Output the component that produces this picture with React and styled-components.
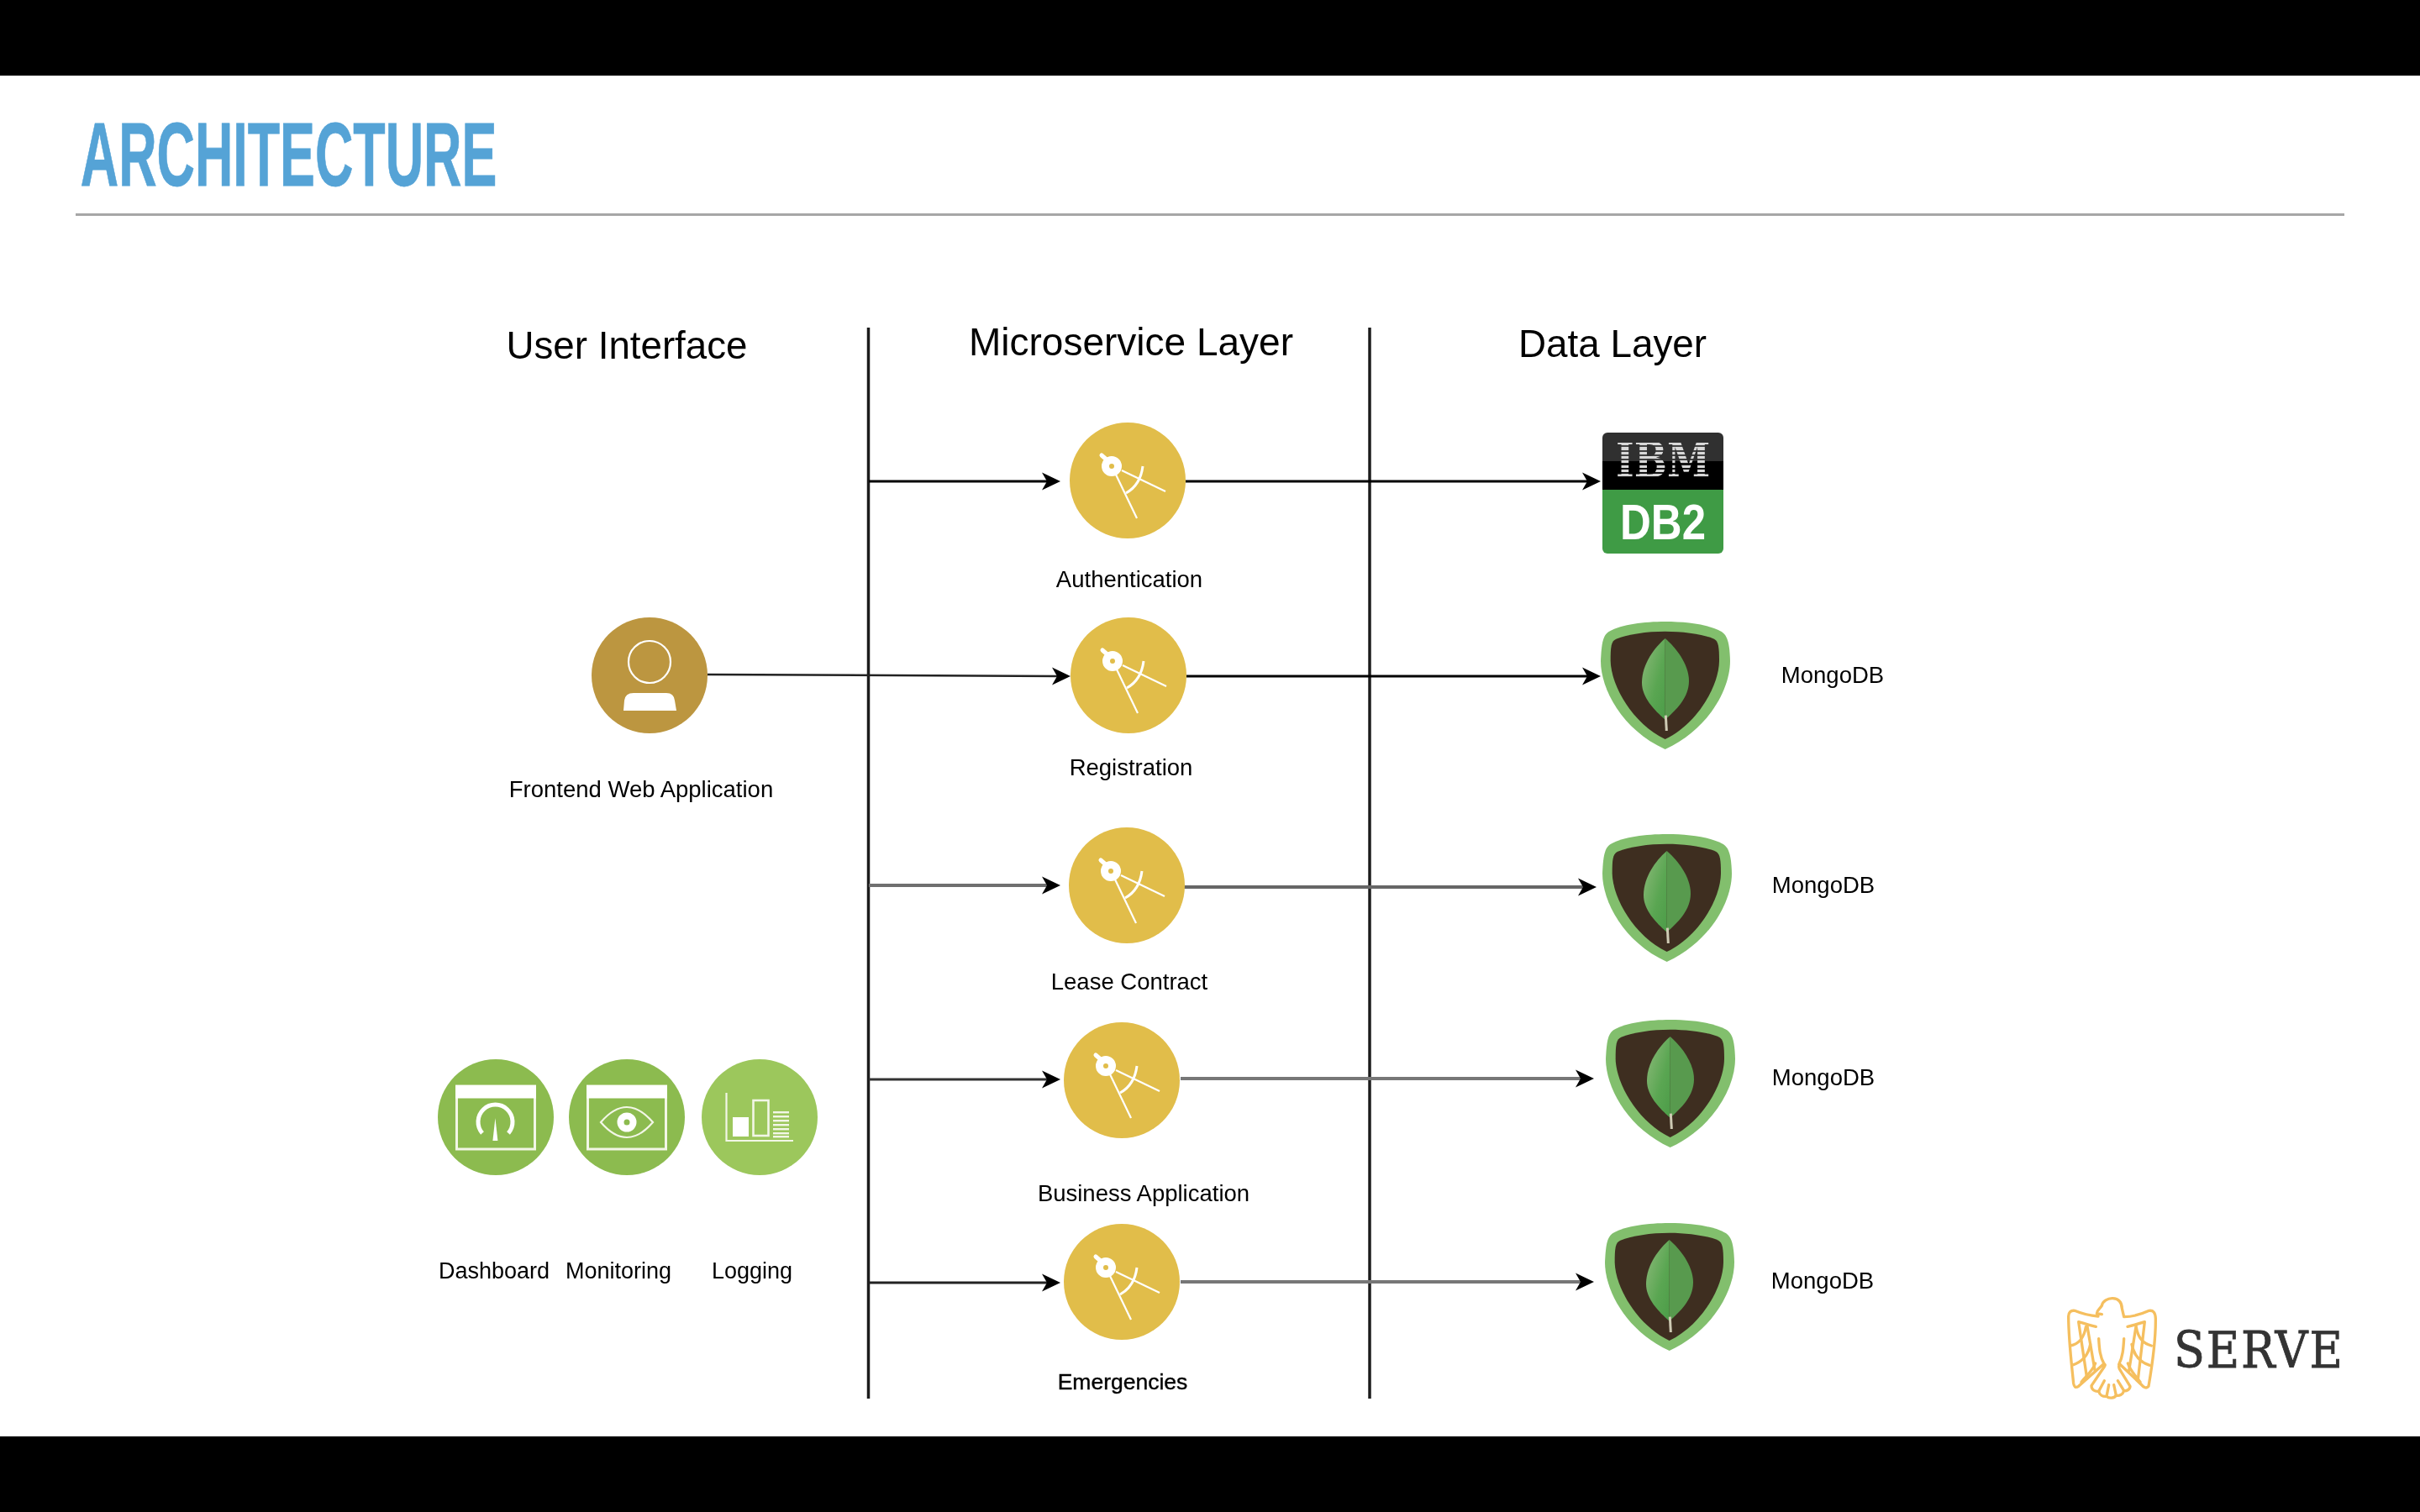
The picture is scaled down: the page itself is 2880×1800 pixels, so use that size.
import React from "react"
import styled, { createGlobalStyle } from "styled-components"

const DIAGRAM_TOP = 300

const GlobalStyle = createGlobalStyle`
    html, body {
        margin: 0;
        padding: 0;
        background: #fff;
    }
`

const Page = styled.div`
    width: 2880px;
    height: 1800px;
    display: flex;
    flex-direction: column;
    overflow: hidden;
    font-family: "Liberation Sans", Arial, sans-serif;
`

const BlackBar = styled.div`
    flex: 0 0 90px;
    background: #000;
`

const Slide = styled.main`
    flex: 1;
    position: relative;
    background: #fff;
`

const Header = styled.header`
    height: 164px;
    margin: 0 90px;
    border-bottom: 3px solid #a6a6a6;
    overflow: hidden;
`

const Title = styled.h1`
    margin: 0;
    padding: 41px 0 0 10px;
    font-family: "Liberation Sans", sans-serif;
    font-size: 107px;
    line-height: 106px;
    font-weight: 700;
    color: #55a3d6;
    white-space: nowrap;
    transform: scaleX(0.587);
    transform-origin: left top;
    -webkit-text-stroke: 0.8px #55a3d6;
    filter: blur(0.4px);
`

const Diagram = styled.section`
    position: absolute;
    left: 0;
    top: ${DIAGRAM_TOP - 90}px;
    width: 2880px;
    height: ${1710 - DIAGRAM_TOP}px;
    filter: blur(0.6px);
`

const Connectors = styled.svg`
    position: absolute;
    left: 0;
    top: 0;
    width: 2880px;
    height: ${1710 - DIAGRAM_TOP}px;
`

const Node = styled.div`
    position: absolute;
    left: ${p => p.$x}px;
    top: ${p => p.$y - DIAGRAM_TOP}px;
`

const Circle = styled(Node)`
    width: 138px;
    height: 138px;
    border-radius: 50%;
    background: ${p => p.$color};

    svg {
        display: block;
        width: 138px;
        height: 138px;
    }
`

const Shield = styled(Node)`
    width: 154px;
    height: 152px;

    svg {
        display: block;
        width: 154px;
        height: 152px;
    }
`

const Label = styled.div`
    position: absolute;
    left: ${p => p.$x}px;
    top: ${p => p.$y - DIAGRAM_TOP}px;
    transform: translate(-50%, -50%);
    font-size: ${p => p.$size || 27.5}px;
    line-height: 1.2;
    color: #000;
    white-space: nowrap;
    ${p => p.$strong && "-webkit-text-stroke: 0.4px #000;"}
`

const Db2Badge = styled(Node)`
    width: 144px;
    height: 144px;
    border-radius: 6px;
    overflow: hidden;
    display: flex;
    flex-direction: column;
`

const Db2Top = styled.div`
    flex: 0 0 68px;
    display: flex;
    align-items: flex-start;
    justify-content: center;
    background: linear-gradient(#303030 0 50%, #000 50%);
`

const IbmMark = styled.span`
    margin-top: 12px;
    height: 42px;
    font-family: "DejaVu Serif", serif;
    font-weight: 700;
    font-size: 58px;
    line-height: 42px;
    color: transparent;
    background: repeating-linear-gradient(#d8d8d8 0 3.2px, rgba(216, 216, 216, 0.1) 3.2px 5.3px);
    -webkit-background-clip: text;
    background-clip: text;
    transform: scaleX(0.8);
`

const Db2Bottom = styled.div`
    flex: 1;
    display: flex;
    align-items: center;
    justify-content: center;
    background: #3f9b45;
`

const Db2Mark = styled.span`
    font-weight: 700;
    font-size: 60px;
    color: #fff;
    transform: scaleX(0.85);
`

const Logo = styled.div`
    position: absolute;
    left: 2457px;
    bottom: 41px;
    display: flex;
    align-items: center;
    gap: 14px;
`

const LogoWord = styled.span`
    font-family: "DejaVu Serif", serif;
    font-size: 59px;
    line-height: 1;
    letter-spacing: 2px;
    color: #333;
    padding-top: 4px;
    transform: scaleX(0.915);
    transform-origin: left center;
    -webkit-text-stroke: 0.8px #333;
`

// service compass, drawn on the 138px circle
const CompassIcon = () => (
    <svg viewBox="0 0 138 138">
        <circle cx="50" cy="52" r="7.5" fill="none" stroke="#fff" strokeWidth="9" />
        <path d="M38 39 L46 46" stroke="#fff" strokeWidth="5" strokeLinecap="round" />
        <path d="M55 62 L80 114" stroke="#fff" strokeWidth="2.2" />
        <path d="M62 57 L114 82" stroke="#fff" strokeWidth="2.2" />
        <path d="M87 52 C85 68 78 78 67 84" fill="none" stroke="#fff" strokeWidth="3" />
    </svg>
)

const PersonIcon = () => (
    <svg viewBox="0 0 138 138">
        <circle cx="69" cy="53" r="25" fill="none" stroke="#fff" strokeWidth="2.2" />
        <path d="M38 111 L39 99 Q40 90 50 90 H89 Q98 90 99 99 L101 111 Z" fill="#fff" />
    </svg>
)

const WindowFrame = () => (
    <>
        <rect x="22.5" y="32" width="93" height="75" fill="none" stroke="#f2f6e6" strokeWidth="3" />
        <rect x="21" y="31" width="96" height="15.5" fill="#fff" />
    </>
)

const GaugeIcon = () => (
    <svg viewBox="0 0 138 138">
        <WindowFrame />
        <path d="M53 88 A20.5 20.5 0 1 1 84 88" fill="none" stroke="#fff" strokeWidth="5" />
        <path d="M68.4 70 L65.4 97 H71.4 Z" fill="#fff" />
    </svg>
)

const EyeIcon = () => (
    <svg viewBox="0 0 138 138">
        <WindowFrame />
        <path d="M38 75 Q69 39 100 75 Q69 111 38 75 Z" fill="none" stroke="#f2f6e6" strokeWidth="2.2" />
        <circle cx="69" cy="75" r="7.5" fill="none" stroke="#fff" strokeWidth="8" />
    </svg>
)

const BarsIcon = () => (
    <svg viewBox="0 0 138 138">
        <path d="M29.5 40 V97 H109" fill="none" stroke="#f2f6e6" strokeWidth="2.2" />
        <rect x="37" y="69" width="19" height="23" fill="#fff" />
        <rect x="61.5" y="49" width="18" height="42" fill="none" stroke="#f2f6e6" strokeWidth="2.6" />
        {[62, 67, 72, 77, 82, 87, 91].map(y => (
            <rect key={y} x="85" y={y} width="19" height="2.4" fill="#f2f6e6" />
        ))}
    </svg>
)

const MongoIcon = ({ id }) => (
    <svg viewBox="75 60 462 456">
        <defs>
            <linearGradient id={`leaf${id}`} x1="0" y1="0" x2="1" y2="1">
                <stop offset="0" stopColor="#8fbb7c" />
                <stop offset="0.6" stopColor="#5aa652" />
                <stop offset="1" stopColor="#4c9c48" />
            </linearGradient>
        </defs>
        <path
            d="M305 60 C230 60 150 70 105 95 C85 107 78 130 75 200 C75 300 150 445 305 516 C460 445 537 300 537 200 C535 130 525 107 505 95 C460 70 380 60 305 60 Z"
            fill="#82bf6d"
        />
        <path
            d="M305 95 C240 95 170 105 130 122 C112 130 110 150 110 200 C112 290 190 425 305 480 C420 425 497 290 498 200 C498 150 495 130 480 122 C440 105 370 95 305 95 Z"
            fill="#3e2e20"
        />
        <path d="M305 120 C270 150 222 210 222 278 C222 330 265 375 305 410 Z" fill={`url(#leaf${id})`} />
        <path d="M305 120 C340 150 390 210 390 272 C390 330 345 375 305 410 Z" fill="#589a4e" />
        <path d="M307 395 L310 450" stroke="#cfcbb4" strokeWidth="9" />
    </svg>
)

const EagleIcon = () => (
    <svg width="116" height="127" viewBox="50 35 348 381" fill="none" stroke="#f5bf5f" strokeWidth="10" strokeLinecap="round" strokeLinejoin="round">
        <path d="M183 103 L165 100 C165 88 176 84 183 72 C186 56 204 45 222 46 C242 47 254 60 255 82 L262 112 C295 112 330 100 352 90 C366 88 374 96 375 118 C376 200 362 290 350 360 C342 370 332 364 322 352 L248 282 C240 288 246 300 252 308 L284 360 C284 372 270 378 262 376 C258 390 245 396 234 392 C228 404 208 404 200 396 C186 398 175 390 172 378 C158 380 146 372 146 358 L192 290 C198 282 192 280 188 282 L100 360 C88 368 84 360 82 350 C74 270 64 190 64 110 C64 96 72 88 86 90 C110 100 140 108 170 110" />
        <path d="M100 130 C120 136 140 142 162 147 M100 130 L130 332 M130 140 L158 302" />
        <path d="M275 147 C295 142 318 136 336 130 M336 130 L312 336 M306 140 L280 304" />
        <path d="M172 190 C174 225 176 255 192 282 M262 190 C260 225 258 255 244 282" />
        <path d="M70 215 C100 210 120 185 126 148 M76 285 C110 275 135 250 142 210 M110 345 C130 320 150 305 160 278" />
        <path d="M360 215 C330 208 312 185 306 150 M354 285 C320 275 298 250 290 210 M320 345 C302 320 285 305 276 278" />
        <path d="M172 378 L192 340 M200 396 L208 355 M234 392 L226 355 M262 376 L240 340" />
    </svg>
)

const rows = [
    { left: [1034, 1262, 573, "#000", 3], right: [1411, 1905, 573, 573, "#000", 3] },
    { left: [842, 1274, 803, "#222", 2.5, 805], right: [1412, 1905, 805, 805, "#000", 3] },
    { left: [1034, 1262, 1054, "#6f6f6f", 4], right: [1408, 1900, 1056, 1056, "#666", 4] },
    { left: [1034, 1262, 1285, "#333", 3], right: [1405, 1897, 1284, 1284, "#777", 4] },
    { left: [1034, 1262, 1527, "#222", 3], right: [1405, 1897, 1526, 1526, "#777", 4] }
]

const Arrow = ({ x1, x2, y1, y2, color, width }) => (
    <>
        <line x1={x1} y1={y1} x2={x2 - 14} y2={y2} stroke={color} strokeWidth={width} />
        <path d={`M${x2} ${y2} L${x2 - 22} ${y2 - 10.5} L${x2 - 16} ${y2} L${x2 - 22} ${y2 + 10.5} Z`} fill="#000" />
    </>
)

const services = [
    { x: 1273, y: 503, label: "Authentication", lx: 1344, ly: 689 },
    { x: 1274, y: 735, label: "Registration", lx: 1346, ly: 913 },
    { x: 1272, y: 985, label: "Lease Contract", lx: 1344, ly: 1168 },
    { x: 1266, y: 1217, label: "Business Application", lx: 1361, ly: 1420 },
    { x: 1266, y: 1457, label: "Emergencies", lx: 1336, ly: 1646, strong: true, size: 26.5 }
]

const stores = [
    { x: 1905, y: 740, lx: 2181, ly: 803 },
    { x: 1907, y: 993, lx: 2170, ly: 1053 },
    { x: 1911, y: 1214, lx: 2170, ly: 1282 },
    { x: 1910, y: 1456, lx: 2169, ly: 1524 }
]

const App = () => (
    <Page>
        <GlobalStyle />
        <BlackBar />
        <Slide>
            <Header>
                <Title>ARCHITECTURE</Title>
            </Header>
            <Diagram>
                <Connectors viewBox={`0 ${DIAGRAM_TOP} 2880 ${1710 - DIAGRAM_TOP}`}>
                    <line x1="1033.5" y1="390" x2="1033.5" y2="1665" stroke="#1c1c1c" strokeWidth="3.5" />
                    <line x1="1630" y1="390" x2="1630" y2="1665" stroke="#1c1c1c" strokeWidth="3.5" />
                    {rows.map(({ left, right }, i) => (
                        <g key={i}>
                            <Arrow x1={left[0]} x2={left[1]} y1={left[2]} y2={left[5] || left[2]} color={left[3]} width={left[4]} />
                            <Arrow x1={right[0]} x2={right[1]} y1={right[2]} y2={right[3]} color={right[4]} width={right[5]} />
                        </g>
                    ))}
                </Connectors>

                <Label $x={746} $y={412} $size={45.7}>User Interface</Label>
                <Label $x={1346} $y={408} $size={46}>Microservice Layer</Label>
                <Label $x={1919} $y={410} $size={45.8}>Data Layer</Label>

                <Circle $x={704} $y={735} $color="#bc9640"><PersonIcon /></Circle>
                <Label $x={763} $y={939}>Frontend Web Application</Label>

                <Circle $x={521} $y={1261} $color="#8cbb4f"><GaugeIcon /></Circle>
                <Circle $x={677} $y={1261} $color="#8cbb4f"><EyeIcon /></Circle>
                <Circle $x={835} $y={1261} $color="#9cc75c"><BarsIcon /></Circle>
                <Label $x={588} $y={1513} $size={27}>Dashboard</Label>
                <Label $x={736} $y={1513} $size={27}>Monitoring</Label>
                <Label $x={895} $y={1513} $size={27}>Logging</Label>

                {services.map(s => (
                    <React.Fragment key={s.label}>
                        <Circle $x={s.x} $y={s.y} $color="#e1bd4a"><CompassIcon /></Circle>
                        <Label $x={s.lx} $y={s.ly} $size={s.size} $strong={s.strong}>{s.label}</Label>
                    </React.Fragment>
                ))}

                <Db2Badge $x={1907} $y={515}>
                    <Db2Top><IbmMark>IBM</IbmMark></Db2Top>
                    <Db2Bottom><Db2Mark>DB2</Db2Mark></Db2Bottom>
                </Db2Badge>

                {stores.map((s, i) => (
                    <React.Fragment key={s.y}>
                        <Shield $x={s.x} $y={s.y}><MongoIcon id={i} /></Shield>
                        <Label $x={s.lx} $y={s.ly}>MongoDB</Label>
                    </React.Fragment>
                ))}
            </Diagram>
            <Logo>
                <EagleIcon />
                <LogoWord>SERVE</LogoWord>
            </Logo>
        </Slide>
        <BlackBar />
    </Page>
)

export default App
